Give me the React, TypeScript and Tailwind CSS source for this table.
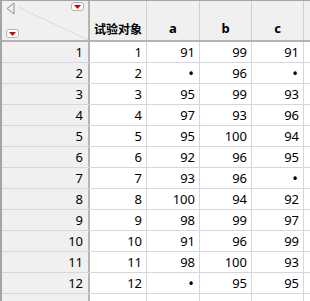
const rows: (number | null)[][] = [
  [1, 91, 99, 91],
  [2, null, 96, null],
  [3, 95, 99, 93],
  [4, 97, 93, 96],
  [5, 95, 100, 94],
  [6, 92, 96, 95],
  [7, 93, 96, null],
  [8, 100, 94, 92],
  [9, 98, 99, 97],
  [10, 91, 96, 99],
  [11, 98, 100, 93],
  [12, null, 95, 95],
];

const widths = ["w-[57px]", "w-[53px]", "w-[52px]", "w-[52px]"];

function DropButton({ className }: { className: string }) {
  return (
    <div
      className={`absolute flex h-[9px] w-[13px] items-center justify-center rounded-[3px] border border-[#b4b4b4] bg-white ${className}`}
    >
      <svg width="7" height="4" viewBox="0 0 7 4">
        <polygon points="0,0 7,0 3.5,4" fill="#d40000" />
      </svg>
    </div>
  );
}

function Cell({ value, width }: { value: number | null; width: string }) {
  return (
    <div
      className={`flex h-full shrink-0 items-center justify-end border-r border-[#d6d6de] pr-[4px] ${width}`}
    >
      {value === null ? <span className="pr-[1px] text-[15px]">•</span> : value}
    </div>
  );
}

export default function App() {
  return (
    <div className="h-[301px] w-[310px] overflow-hidden border-l-2 border-t border-[#a4a4a4] bg-white font-['Noto_Sans','Noto_Sans_CJK_SC',sans-serif] text-[13px] leading-none text-black">
      <div className="flex h-[41px] border-b-2 border-[#b4b4b4] bg-[#f0f0f0]">
        <div className="relative h-full w-[88px] shrink-0 border-r-2 border-[#b4b4b4]">
          <svg className="absolute inset-0" width="86" height="39">
            <line x1="16" y1="6" x2="86" y2="39" stroke="#d8d8e4" strokeWidth="1" />
            <polygon points="12,2 5,7.5 12,13" fill="none" stroke="#8c8c8c" strokeWidth="1" />
          </svg>
          <DropButton className="left-[69px] top-[1px]" />
          <DropButton className="left-[4px] top-[28px]" />
        </div>
        {["试验对象", "a", "b", "c"].map((name, i) => (
          <div
            key={name}
            className={`flex h-full shrink-0 items-end justify-center border-r border-[#d0d0d0] pb-[5px] font-bold ${widths[i]} ${i === 0 ? "text-[12px] font-['Noto_Sans_CJK_SC',sans-serif]" : ""}`}
          >
            {name}
          </div>
        ))}
        <div className="h-full w-[60px] shrink-0" />
      </div>
      {rows.map((row) => (
        <div key={row[0]} className="flex h-[21px] border-b border-[#d6d6de]">
          <div className="flex h-full w-[88px] shrink-0 items-center justify-end border-r-2 border-[#b4b4b4] bg-[#f0f0f0] pr-[5px]">
            {row[0]}
          </div>
          {row.map((v, i) => (
            <Cell key={i} value={v} width={widths[i]} />
          ))}
          <div className="h-full w-[60px] shrink-0" />
        </div>
      ))}
      <div className="flex h-[21px]">
        <div className="h-full w-[88px] shrink-0 border-r-2 border-[#b4b4b4] bg-[#f0f0f0]" />
        {widths.map((w, i) => (
          <div key={i} className={`h-full shrink-0 border-r border-[#d6d6de] ${w}`} />
        ))}
      </div>
    </div>
  );
}
